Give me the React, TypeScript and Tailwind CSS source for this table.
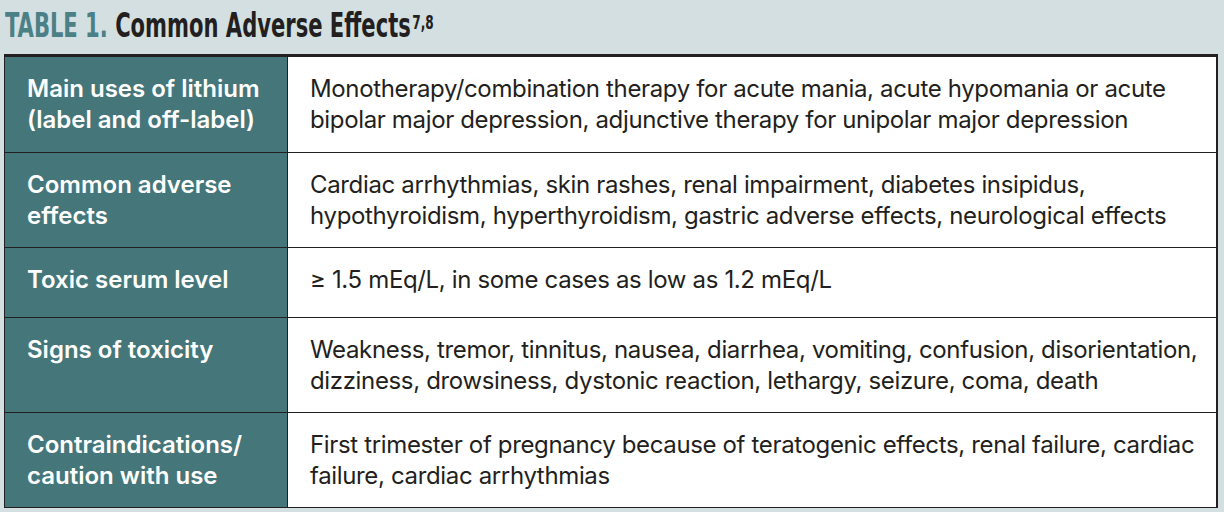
const rows: { label: string[]; text: string[]; h: string }[] = [
  {
    label: ["Main uses of lithium", "(label and off-label)"],
    text: [
      "Monotherapy/combination therapy for acute mania, acute hypomania or acute",
      "bipolar major depression, adjunctive therapy for unipolar major depression",
    ],
    h: "h-[95px]",
  },
  {
    label: ["Common adverse", "effects"],
    text: [
      "Cardiac arrhythmias, skin rashes, renal impairment, diabetes insipidus,",
      "hypothyroidism, hyperthyroidism, gastric adverse effects, neurological effects",
    ],
    h: "h-[95px]",
  },
  {
    label: ["Toxic serum level"],
    text: ["≥ 1.5 mEq/L, in some cases as low as 1.2 mEq/L"],
    h: "h-[70px]",
  },
  {
    label: ["Signs of toxicity"],
    text: [
      "Weakness, tremor, tinnitus, nausea, diarrhea, vomiting, confusion, disorientation,",
      "dizziness, drowsiness, dystonic reaction, lethargy, seizure, coma, death",
    ],
    h: "h-[95px]",
  },
  {
    label: ["Contraindications/", "caution with use"],
    text: [
      "First trimester of pregnancy because of teratogenic effects, renal failure, cardiac",
      "failure, cardiac arrhythmias",
    ],
    h: "h-[95px]",
  },
];

export default function App() {
  return (
    <div className="w-[1224px] h-[512px] bg-[#d3dfe0] overflow-hidden">
      {/* title */}
      <div className="h-[54px] pl-[5px] pt-[6px]">
        <div
          className="inline-block origin-left scale-x-[0.71] whitespace-nowrap text-[33px] font-bold leading-[40px]"
          style={{ fontFamily: '"DejaVu Sans Condensed", "Roboto", sans-serif' }}
        >
          <span className="text-[#4b8087]">TABLE 1.</span>{" "}
          <span className="text-[#231f20]">Common Adverse Effects</span>
          <span className="text-[#231f20] text-[19px] align-top relative top-[-4px] ml-[2px]">
            7,8
          </span>
        </div>
      </div>

      {/* table */}
      <div
        className="ml-[4px] w-[1214px] border-t-[3px] border-l border-r-[2px] border-b border-[#231f20] bg-white"
        style={{ fontFamily: '"Inter", "Liberation Sans", sans-serif' }}
      >
        {rows.map((r, i) => (
          <div
            key={i}
            className={`flex ${r.h} ${i > 0 ? "border-t border-[#231f20]" : ""}`}
          >
            <div className="w-[283px] shrink-0 bg-[#44767a] border-r border-[#231f20] pt-[16px] pl-[22px] text-white font-semibold text-[24px] leading-[31px]">
              {r.label.map((l) => (
                <div key={l} className="whitespace-nowrap">{l}</div>
              ))}
            </div>
            <div className="flex-1 pt-[16px] pl-[22px] text-[#231f20] text-[24px] leading-[31px] tracking-[-0.35px]">
              {r.text.map((t) => (
                <div key={t} className="whitespace-nowrap">{t}</div>
              ))}
            </div>
          </div>
        ))}
      </div>
    </div>
  );
}
